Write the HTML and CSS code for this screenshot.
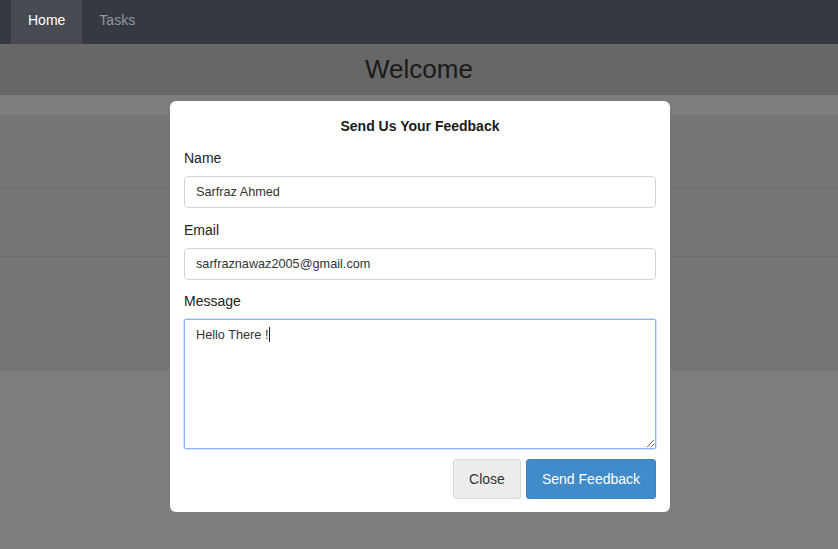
FILE: index.html
```html
<!DOCTYPE html>
<html lang="en">
<head>
<meta charset="utf-8">
<title>Feedback</title>
<link rel="stylesheet" href="styles.css">
</head>
<body>
<nav class="navbar">
  <a class="nav-item active" href="#">Home</a>
  <a class="nav-item" href="#">Tasks</a>
</nav>
<main class="page">
  <header class="welcome">Welcome</header>
  <section class="panel">
    <div class="panel-row row-a"></div>
    <div class="panel-row row-b"></div>
    <div class="panel-row row-c"></div>
  </section>
</main>
<div class="overlay">
  <div class="modal">
    <h3 class="modal-title">Send Us Your Feedback</h3>
    <div class="form-group">
      <label class="label" for="name">Name</label>
      <input class="input" id="name" type="text" value="Sarfraz Ahmed">
    </div>
    <div class="form-group">
      <label class="label" for="email">Email</label>
      <input class="input" id="email" type="text" value="sarfraznawaz2005@gmail.com">
    </div>
    <div class="form-group last">
      <label class="label" for="msg">Message</label>
      <div class="textarea-wrap">
        <textarea class="textarea" id="msg">Hello There !</textarea>
        <span class="caret"></span>
      </div>
    </div>
    <div class="actions">
      <button class="btn btn-close" type="button">Close</button>
      <button class="btn btn-primary" type="button">Send Feedback</button>
    </div>
  </div>
</div>
</body>
</html>
```
FILE: styles.css
```css
* { box-sizing: border-box; }
html, body { margin: 0; padding: 0; }
body {
  font-family: "Liberation Sans", Arial, sans-serif;
  background: #f9fbff;
  width: 838px;
  height: 549px;
  overflow: hidden;
}
.navbar {
  position: relative;
  z-index: 20;
  display: flex;
  height: 44px;
  background: #353a42;
  padding-left: 11px;
}
.nav-item {
  display: flex;
  align-items: center;
  padding: 0 17px 4px;
  font-size: 14px;
  color: #9198a0;
  text-decoration: none;
}
.nav-item.active {
  background: #474b51;
  color: #ffffff;
}
.welcome {
  height: 51px;
  background: #cecece;
  color: #363636;
  font-size: 26px;
  display: flex;
  align-items: center;
  justify-content: center;
  margin-bottom: 20px;
}
.panel { background: #e8eaee; }
.panel-row { border-bottom: 1px solid #d6d8dc; }
.row-a { height: 74px; }
.row-b { height: 68px; }
.row-c { height: 114px; border-bottom: none; }
.overlay {
  position: fixed;
  top: 44px;
  left: 0;
  right: 0;
  bottom: 0;
  z-index: 10;
  background: rgba(0, 0, 0, 0.5);
  display: flex;
  justify-content: center;
  align-items: flex-start;
  padding: 57px 0 0 2px;
}
.modal {
  width: 500px;
  background: #ffffff;
  border-radius: 6px;
  padding: 15px 14px 13px;
  color: #222;
}
.modal-title {
  margin: 0 0 12px;
  font-size: 14px;
  line-height: 20px;
  font-weight: bold;
  text-align: center;
  color: #1a1a1a;
}
.form-group { margin-bottom: 11.5px; }
.form-group.last { margin-bottom: 0; }
.label {
  display: block;
  font-size: 14px;
  line-height: 20px;
  margin-bottom: 8px;
  color: #222;
}
.input {
  display: block;
  width: 100%;
  height: 32px;
  border: 1px solid #d0d3d8;
  border-radius: 4px;
  padding: 0 11px;
  font-family: "Liberation Sans", Arial, sans-serif;
  font-size: 12.7px;
  color: #333;
  background: #fff;
  outline: none;
}
.textarea-wrap { position: relative; }
.textarea {
  display: block;
  width: 100%;
  height: 130px;
  border: 1px solid #8ab4f8;
  border-radius: 2px;
  padding: 7px 11px;
  font-family: "Liberation Sans", Arial, sans-serif;
  font-size: 12.7px;
  line-height: 16px;
  color: #333;
  resize: vertical;
  outline: none;
  box-shadow: 0 0 0 1px rgba(138, 180, 248, 0.35);
}
.caret {
  position: absolute;
  left: 85px;
  top: 8px;
  width: 1px;
  height: 15px;
  background: #222;
}
.actions {
  display: flex;
  justify-content: flex-end;
  gap: 5px;
  margin-top: 10px;
}
.btn {
  height: 40px;
  padding: 0;
  border-radius: 3px;
  font-family: "Liberation Sans", Arial, sans-serif;
  font-size: 14px;
  white-space: nowrap;
  cursor: pointer;
}
.btn-close {
  background: #ececec;
  border: 1px solid #d6d6d6;
  color: #333;
  width: 68px;
}
.btn-primary {
  background: #428bca;
  border: 1px solid #3d82c0;
  color: #fff;
  width: 130px;
}
```
